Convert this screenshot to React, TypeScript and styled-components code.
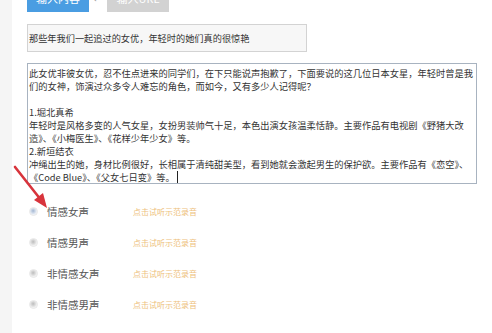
import styled, { createGlobalStyle } from "styled-components";

const GlobalStyle = createGlobalStyle`
  html, body {
    margin: 0;
    padding: 0;
    background: #ffffff;
    overflow: hidden;
  }
  body {
    font-family: "Noto Sans CJK SC", "Noto Sans", sans-serif;
  }
`;

const lines = [
  "此女优非彼女优，忍不住点进来的同学们，在下只能说声抱歉了，下面要说的这几位日本女星，年轻时曾是我",
  "们的女神，饰演过众多令人难忘的角色，而如今，又有多少人记得呢？",
  "",
  "1.堀北真希",
  "年轻时是风格多变的人气女星，女扮男装帅气十足，本色出演女孩温柔恬静。主要作品有电视剧《野猪大改",
  "造》、《小梅医生》、《花样少年少女》等。",
  "2.新垣结衣",
  "冲绳出生的她，身材比例很好，长相属于清纯甜美型，看到她就会激起男生的保护欲。主要作品有《恋空》、",
];

const voices = [
  { name: "情感女声", selected: true },
  { name: "情感男声", selected: false },
  { name: "非情感女声", selected: false },
  { name: "非情感男声", selected: false },
];

const App = () => {
  return (
    <>
      <GlobalStyle />
      <Page>
        <Strip />
        <Main>
          <Tabs>
            <Tab $active>输入内容</Tab>
            <TabArrow>←</TabArrow>
            <Tab>输入URL</Tab>
          </Tabs>
          <TitleInput>那些年我们一起追过的女优，年轻时的她们真的很惊艳</TitleInput>
          <ContentBox>
            {lines.map((l, i) => (
              <Line key={i}>{l || "\u00a0"}</Line>
            ))}
            <Line>
              《Code Blue》、《父女七日变》等。<Caret />
            </Line>
          </ContentBox>
          <VoiceList>
            {voices.map((v) => (
              <VoiceRow key={v.name}>
                <Radio $selected={v.selected} />
                <VoiceName>{v.name}</VoiceName>
                <Sample>点击试听示范录音</Sample>
              </VoiceRow>
            ))}
          </VoiceList>
        </Main>
        <Pointer width="60" height="60" viewBox="0 0 60 60">
          <line x1="3" y1="3" x2="29" y2="36" stroke="#d8343c" strokeWidth="2.6" strokeLinecap="round" />
          <polygon points="35,44 22,36 31,29" fill="#d8343c" />
        </Pointer>
      </Page>
    </>
  );
};

export default App;

const Page = styled.div`
  position: relative;
  display: flex;
  width: 492px;
  height: 333px;
  overflow: hidden;
`;

const Strip = styled.div`
  width: 12px;
  flex: none;
  background: #f5f5f5;
`;

const Main = styled.div`
  flex: 1;
  padding-left: 15px;
  display: flex;
  flex-direction: column;
`;

const Tabs = styled.div`
  display: flex;
  align-items: flex-start;
  margin-top: -14px;
  height: 26px;
`;

const Tab = styled.div<{ $active?: boolean }>`
  width: 62px;
  height: 26px;
  line-height: 24px;
  text-align: center;
  font-size: 11px;
  color: #ffffff;
  background: ${(p) => (p.$active ? "#4a9de2" : "#d2d2d2")};
`;

const TabArrow = styled.div`
  width: 18px;
  text-align: center;
  font-size: 11px;
  line-height: 24px;
  color: #9a9a9a;
`;

const TitleInput = styled.div`
  margin-top: 12px;
  width: 280px;
  height: 28px;
  box-sizing: border-box;
  border: 1px solid #d3d3d3;
  background: #f7f7f7;
  padding-left: 1px;
  font-size: 9.2px;
  line-height: 26px;
  color: #333;
  white-space: nowrap;
`;

const ContentBox = styled.div`
  margin-top: 11px;
  width: 450px;
  height: 121px;
  box-sizing: border-box;
  border: 1px solid #a8b3c0;
  background: #fff;
  padding: 3px 0 0 1px;
  font-size: 9.25px;
  line-height: 13px;
  color: #333;
  white-space: pre;
  overflow: hidden;
`;

const Line = styled.div``;

const Caret = styled.span`
  display: inline-block;
  width: 0;
  height: 12px;
  border-left: 1px solid #222;
  margin-left: 2px;
  vertical-align: -2px;
`;

const VoiceList = styled.div`
  margin-top: 12px;
  display: flex;
  flex-direction: column;
`;

const VoiceRow = styled.div`
  display: grid;
  grid-template-columns: 20px 86px auto;
  align-items: center;
  height: 31px;
`;

const Radio = styled.span<{ $selected?: boolean }>`
  margin-left: 2px;
  width: 9px;
  height: 9px;
  border-radius: 50%;
  border: 1px solid #e8e8e8;
  box-sizing: border-box;
  background: ${(p) =>
    p.$selected
      ? "radial-gradient(circle at 45% 40%, #a3b6d2 0, #d2dcea 40%, #f7f8fb 75%)"
      : "radial-gradient(circle at 45% 40%, #bcbcbc 0, #dcdcdc 40%, #f8f8f8 75%)"};
`;

const VoiceName = styled.span`
  font-size: 10.5px;
  color: #555;
  white-space: nowrap;
`;

const Sample = styled.span`
  font-size: 8px;
  color: #eebf7c;
  white-space: nowrap;
`;

const Pointer = styled.svg`
  position: absolute;
  left: 12px;
  top: 164px;
  overflow: visible;
`;
